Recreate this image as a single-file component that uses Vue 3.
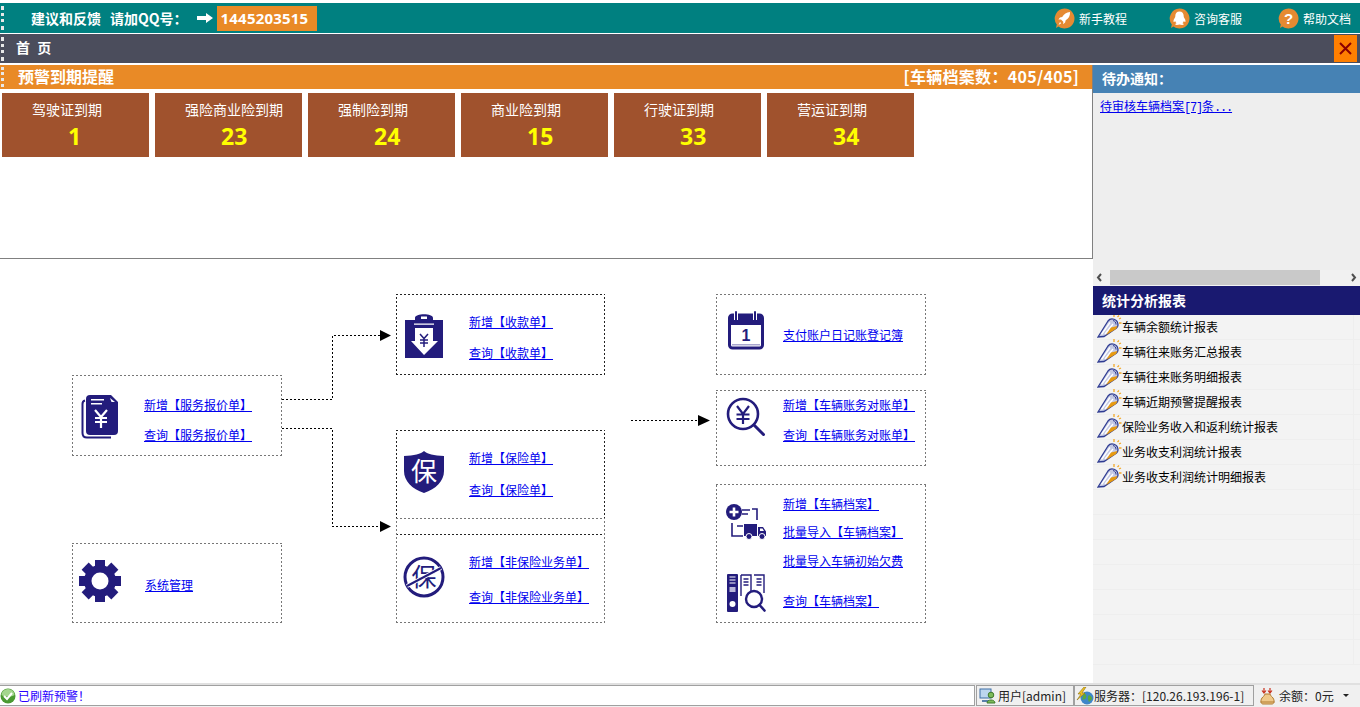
<template>
  <div class="page">
    <div class="top-bar">
      <i class="grip"></i>
      <span class="advice">建议和反馈</span>
      <span class="advice qq">请加QQ号：</span>
      <svg class="arrow-white" width="17" height="10" viewBox="0 0 17 10"><path d="M0 3h9V0l7 5-7 5V7H0z" fill="#fff" /></svg>
      <span class="qq-num">1445203515</span>
      <div class="top-links">
        <a class="top-link t1">
          <svg width="21" height="21" viewBox="0 0 21 21">
            <path d="M10.500 .5a10 10 0 1 1-6 18l-2.500 1.500.8-3.500A10 10 0 0 1 10.500 .5z" fill="#e58a32" />
            <path d="M16 4c-3.500.3-6 2-7.800 5l-2.200.6-1.600 2 2.600-.2 2.300 2.300-.1 2.500 1.900-1.600.6-2.300c3-1.800 4.500-4.300 4.300-8.300z" fill="#fff" />
            <path d="M6 14l1.200 1.200L4.500 17z" fill="#fff" />
          </svg>
          新手教程
        </a>
        <a class="top-link t2">
          <svg width="21" height="21" viewBox="0 0 21 21">
            <path d="M10.500 .5a10 10 0 1 1-6 18l-2.500 1.500.8-3.500A10 10 0 0 1 10.500 .5z" fill="#e58a32" />
            <path d="M10.500 3.500c-2.700 0-4.200 2-4.200 4.400 0 1-.2 1.500-.9 2.600-.9 1.400-1.200 3-.6 3.400.4.200.9-.3 1.300-1 .3 1 .8 1.700 1.500 2.300-1 .4-1.500.8-1.300 1.300.3.600 3 .5 4.200-.1 1.200.6 3.900.7 4.200.1.200-.5-.3-.9-1.300-1.300.7-.6 1.200-1.300 1.500-2.300.4.700.9 1.200 1.300 1 .6-.4.300-2-.6-3.400-.7-1.100-.9-1.600-.9-2.600 0-2.400-1.500-4.400-4.200-4.400z" fill="#fff" />
          </svg>
          咨询客服
        </a>
        <a class="top-link t3">
          <svg width="21" height="21" viewBox="0 0 21 21">
            <path d="M10.500 .5a10 10 0 1 1-6 18l-2.500 1.500.8-3.500A10 10 0 0 1 10.500 .5z" fill="#e58a32" />
            <text x="10.500" y="16" text-anchor="middle" class="q-mark">?</text>
          </svg>
          帮助文档
        </a>
      </div>
    </div>

    <div class="tab-bar">
      <i class="grip"></i>
      <span class="tab-title">首 页</span>
      <button class="close-btn">
        <svg width="13" height="13" viewBox="0 0 13 13"><path d="M1 1l11 11M12 1L1 12" stroke="#8b0000" stroke-width="2" /></svg>
      </button>
    </div>

    <div class="body">
      <div class="left">
        <div class="warn-panel">
          <div class="warn-head">
            <i class="grip"></i>
            <span class="warn-title">预警到期提醒</span>
            <span class="warn-count">[车辆档案数：405/405]</span>
          </div>
          <div class="cards">
            <div v-for="c in cards" :key="c.name" class="card">
              <div class="card-name">{{ c.name }}</div>
              <div class="card-num">{{ c.num }}</div>
            </div>
          </div>
        </div>

        <div class="canvas">
          <div
            v-for="n in nodes"
            :key="n.id"
            class="node"
            :class="n.tone"
            :style="{ left: n.x + 'px', top: n.y + 'px', width: n.w + 'px', height: n.h + 'px' }"
          >
            <div class="links" :style="{ paddingLeft: n.lx + 'px' }">
              <a v-for="(l, i) in n.links" :key="l[0]" class="link" :style="{ marginTop: linkGap(n, i) + 'px' }">{{ l[0] }}</a>
            </div>
          </div>

          <svg class="wires" width="1092" height="424" viewBox="0 0 1092 424">
            <path class="wire" d="M282 140.500H332.500V76.500H380" />
            <path class="wire" d="M282 169.500H332.500V267.500H380" />
            <path class="wire" d="M631 161.500H698" />
            <path d="M380 71l11 5.500-11 5.500zM380 262l11 5.500-11 5.500zM698 156l12 5.500-12 5.500z" fill="#000" />

            <!-- 服务报价单 -->
            <g transform="translate(81 136)" fill="#231c7c">
              <path d="M4 5.500C2 6 1.500 7 1.500 9v29c0 3 1.500 4.500 4.500 4.500h24" fill="none" stroke="#231c7c" stroke-width="2" />
              <path d="M9 0h21l7 7v29a4 4 0 0 1-4 4H9a4 4 0 0 1-4-4V4a4 4 0 0 1 4-4z" />
              <path d="M10 4h13v1.500H10zM10 8h11v1.500H10zM29 3l5 4h-3.500z" fill="#fff" />
              <path d="M14 15l6 7 6-7M20 22v11M14 23h12M14 27h12" fill="none" stroke="#fff" stroke-width="2.200" />
            </g>

            <!-- 系统管理 -->
            <g transform="translate(100 322)" fill="#231c7c">
              <rect v-for="a in [0, 45, 90, 135]" :key="a" x="-5" y="-21" width="10" height="42" :transform="`rotate(${a})`" />
              <circle r="16" />
              <circle r="8.500" fill="#fff" />
            </g>

            <!-- 收款单 -->
            <g transform="translate(405 55)">
              <path fill="#231c7c" d="M0 6h10V4c0-5 18-5 18 0v2h10v38H0z" />
              <path fill="#fff" d="M16 2.500h6v2.500h-6zM9 9.500h20v1.200H9z" />
              <path fill="#fff" d="M10 14h18v13h5L19 41 6 27h4z" />
              <path d="M15 20l4 4.500 4-4.500M19 24.500V33M15 26h8M15 29h8" fill="none" stroke="#231c7c" stroke-width="1.500" />
            </g>

            <!-- 保险单 -->
            <g transform="translate(404 192)">
              <path fill="#231c7c" d="M20 0c3 3 10 4.500 20 5v15c0 10-8 18-20 22C8 38 0 30 0 20V5c10-.5 17-2 20-5z" />
              <text x="20" y="30" text-anchor="middle" class="ico-cn shield">保</text>
            </g>

            <!-- 非保险业务单 -->
            <g transform="translate(403 297)">
              <circle cx="21" cy="21" r="19" fill="#fff" stroke="#231c7c" stroke-width="3" />
              <text x="21" y="30" text-anchor="middle" class="ico-cn noins">保</text>
              <path d="M4 30L38 12" stroke="#fff" stroke-width="4" />
              <path d="M4 30L38 12" stroke="#231c7c" stroke-width="2" />
            </g>

            <!-- 日记账 -->
            <g transform="translate(728 52)">
              <rect x="1.500" y="4" width="33" height="33" rx="3" fill="#fff" stroke="#231c7c" stroke-width="3" />
              <path fill="#231c7c" d="M1 4h34v10H1z" />
              <path d="M8 1v8M27 1v8" stroke="#fff" stroke-width="4" />
              <path d="M8 1v8M27 1v8" stroke="#231c7c" stroke-width="2" stroke-linecap="round" />
              <path d="M4 33h28v1.500H4z" fill="#a9a6cf" />
              <text x="18" y="30" text-anchor="middle" class="ico-one">1</text>
            </g>

            <!-- 车辆账务对账单 -->
            <g transform="translate(727 139)">
              <circle cx="16" cy="16" r="15" fill="#fff" stroke="#231c7c" stroke-width="2.600" />
              <path d="M27 27l9.500 9.500" stroke="#231c7c" stroke-width="3" stroke-linecap="round" />
              <path d="M10 8l6 8 6-8M16 16v10M9.500 16.500h13M9.500 21h13" fill="none" stroke="#231c7c" stroke-width="2.200" />
            </g>

            <!-- 车辆档案 -->
            <g transform="translate(725 245)">
              <circle cx="9" cy="8" r="8" fill="#231c7c" />
              <path d="M4.500 8h9M9 3.500v9" stroke="#fff" stroke-width="2.600" />
              <path d="M17 6h8M17 10h6M27 5h5v11M7 19v13h11M12 22h6" fill="none" stroke="#231c7c" stroke-width="1.600" />
              <path fill="#231c7c" d="M19 20h13v12H19zM33 23h5l3 4.500V32h-8z" />
              <circle cx="24" cy="32.500" r="3" fill="#231c7c" stroke="#fff" />
              <circle cx="37" cy="32.500" r="3" fill="#231c7c" stroke="#fff" />
              <path d="M35 24.500h2.500l1.500 2.500h-4z" fill="#fff" />
            </g>
            <g transform="translate(727 315)">
              <rect x="0" y="0" width="11" height="38" rx="1" fill="#231c7c" />
              <path d="M2.500 3h6M2.500 6h6M2.500 9h6" stroke="#fff" stroke-width="1.200" />
              <rect x="2.500" y="13" width="6" height="5" fill="#b9b7da" />
              <circle cx="5.500" cy="30" r="3" fill="#fff" />
              <path d="M14 1h10v18M27 1h10v18M14 1v21M16.500 5h5M16.500 8h5M16.500 11h5M29.500 5h5M29.500 8h5M29.500 11h5" fill="none" stroke="#231c7c" stroke-width="1.400" />
              <circle cx="27" cy="25" r="8" fill="#fff" stroke="#231c7c" stroke-width="2.400" />
              <path d="M32.500 31l5 5.500" stroke="#231c7c" stroke-width="2.600" stroke-linecap="round" />
            </g>
          </svg>
        </div>
      </div>

      <aside class="right">
        <div class="todo-head">待办通知：</div>
        <div class="todo-body">
          <a class="todo-link">待审核车辆档案<span class="half">[7]</span>条<span class="half">...</span></a>
        </div>
        <div class="scrollbar">
          <svg width="17" height="15" viewBox="0 0 17 15"><path d="M8 4L5 7.500 8 11" fill="none" stroke="#505050" stroke-width="2" /></svg>
          <div class="track"><div class="thumb"></div></div>
          <svg width="17" height="15" viewBox="0 0 17 15"><path d="M9 4l3 3.500L9 11" fill="none" stroke="#505050" stroke-width="2" /></svg>
        </div>
        <div class="report-head">统计分析报表</div>
        <div class="reports">
          <div v-for="r in reports" :key="r" class="report">
            <svg width="25" height="24" viewBox="0 0 25 24">
              <path d="M1 23L11 7c3-4 10-2 10 4 0 1-.5 2-1.500 3L7 22.500z" fill="#c4c9e4" stroke="#2f3c92" stroke-width="1.300" />
              <path d="M4.500 20.500L13 8.500M8 20l8-10" stroke="#fff" stroke-width="1.300" fill="none" />
              <path d="M9 21l5-7.500 6.500-1.500-1.500 3z" fill="#e79a10" />
              <path d="M19 10.500c0-2-1-3.500-3-4" stroke="#2f3c92" fill="none" />
              <path d="M17 0v3M22 5l2-1M22 9h2.500M20.500 3l1.500-1.500" stroke="#f3a928" stroke-width="1.300" />
            </svg>
            <span>{{ r }}</span>
          </div>
          <div v-for="i in 7" :key="i" class="report blank"></div>
        </div>
      </aside>
    </div>

    <div class="status-bar">
      <div class="status-msg">
        <svg width="16" height="16" viewBox="0 0 16 16">
          <circle cx="8" cy="8" r="7.500" fill="#4b9a32" />
          <path d="M1.500 7a6.500 6 0 0 1 13 0c-3 2-10 2-13 0z" fill="#a4d68e" />
          <path d="M4 8l3 3 5-6" fill="none" stroke="#fff" stroke-width="2" />
        </svg>
        <span>已刷新预警！</span>
      </div>
      <div class="status-cell user">
        <svg width="17" height="17" viewBox="0 0 17 17">
          <rect x="1" y="2" width="11" height="9" fill="#bcd6ee" stroke="#3f6fa5" />
          <path d="M3 13h7v2H3z" fill="#5a80aa" />
          <circle cx="12" cy="8" r="2.800" fill="#7dbb5a" stroke="#3f7a2b" />
          <path d="M8 16c0-4 8-4 8 0z" fill="#7dbb5a" stroke="#3f7a2b" />
        </svg>
        用户[admin]
      </div>
      <div class="status-cell server">
        <svg width="18" height="18" viewBox="0 0 18 18">
          <circle cx="11" cy="11" r="6.500" fill="#3f86c9" />
          <path d="M8 6c2 1 3 3 2 5s-3 1-4 2M13 8c2 1 3 2 3 4l-3 3c-1-2-2-5 0-7z" fill="#5aa83c" />
          <path d="M8 0L2 7h3L1 13l8-7H6l4-6z" fill="#f0c020" stroke="#8a7010" stroke-width=".6" />
        </svg>
        服务器：[120.26.193.196-1]
      </div>
      <div class="status-cell money">
        <svg width="17" height="18" viewBox="0 0 17 18">
          <path d="M5 1v5M3 3.500L5 6l2-2.500M11 1v5M9 3.500L11 6l2-2.500" fill="none" stroke="#c8321e" stroke-width="1.200" />
          <path d="M6 7h5c.5 2 2 2.500 3 4 2 3 1 6-1 6H4c-2 0-3-3-1-6 1-1.500 2.500-2 3-4z" fill="#efc98a" stroke="#b07a30" />
          <path d="M1.500 15h14" stroke="#b07a30" />
        </svg>
        余额：0元
        <i class="caret"></i>
      </div>
    </div>
  </div>
</template>

<script setup>
const cards = [
  { name: '驾驶证到期', num: 1 },
  { name: '强险商业险到期', num: 23 },
  { name: '强制险到期', num: 24 },
  { name: '商业险到期', num: 15 },
  { name: '行驶证到期', num: 33 },
  { name: '营运证到期', num: 34 },
]

const reports = [
  '车辆余额统计报表',
  '车辆往来账务汇总报表',
  '车辆往来账务明细报表',
  '车辆近期预警提醒报表',
  '保险业务收入和返利统计报表',
  '业务收支利润统计报表',
  '业务收支利润统计明细报表',
]

// y 都是相对 .canvas 的坐标，links 第二项是文字中线距节点顶部的距离
const nodes = [
  { id: 'a', x: 72, y: 116, w: 210, h: 81, lx: 72, tone: 'gray', links: [['新增【服务报价单】', 30], ['查询【服务报价单】', 60]] },
  { id: 'gear', x: 72, y: 284, w: 210, h: 80, lx: 73, tone: 'gray', links: [['系统管理', 42]] },
  { id: 'b', x: 396, y: 35, w: 209, h: 81, lx: 73, tone: 'dark', links: [['新增【收款单】', 28], ['查询【收款单】', 59]] },
  { id: 'c', x: 396, y: 171, w: 209, h: 105, lx: 73, tone: 'dark', links: [['新增【保险单】', 28], ['查询【保险单】', 60]] },
  { id: 'd', x: 396, y: 259, w: 209, h: 105, lx: 73, tone: 'gray', links: [['新增【非保险业务单】', 44], ['查询【非保险业务单】', 79]] },
  { id: 'e', x: 716, y: 35, w: 210, h: 81, lx: 67, tone: 'gray', links: [['支付账户日记账登记簿', 41]] },
  { id: 'f', x: 716, y: 131, w: 210, h: 76, lx: 67, tone: 'gray', links: [['新增【车辆账务对账单】', 15], ['查询【车辆账务对账单】', 45]] },
  { id: 'g', x: 716, y: 225, w: 210, h: 139, lx: 67, tone: 'gray', links: [['新增【车辆档案】', 20], ['批量导入【车辆档案】', 48], ['批量导入车辆初始欠费', 77], ['查询【车辆档案】', 117]] },
]

function linkGap(n, i) {
  const prev = i === 0 ? 1 : n.links[i - 1][1] + 8
  return n.links[i][1] - 8 - prev
}
</script>

<style>
html,
body {
  margin: 0;
  background: #fff;
}
</style>

<style scoped>
.page {
  width: 1360px;
  height: 707px;
  display: flex;
  flex-direction: column;
  overflow: hidden;
  font-family: "Noto Sans CJK SC", "Noto Sans", sans-serif;
  font-size: 12px;
  color: #000;
}

.grip {
  display: block;
  width: 0;
  height: 24px;
  border-left: 3px dotted #e8e8e8;
  margin-left: 1px;
  flex: none;
}

.top-bar {
  height: 30px;
  margin-top: 3px;
  background: #008080;
  display: flex;
  align-items: center;
  color: #fff;
  flex: none;
}

.advice {
  font-size: 14px;
  font-weight: 700;
  margin-left: 27px;
  white-space: nowrap;
}

.advice.qq {
  margin-left: 9px;
}

.arrow-white {
  margin-left: 9px;
}

.qq-num {
  width: 100px;
  height: 25px;
  line-height: 25px;
  margin-left: 3px;
  box-sizing: border-box;
  padding-left: 4px;
  background: #e98a26;
  font-family: "Open Sans", sans-serif;
  font-weight: 700;
  font-size: 15px;
  letter-spacing: 0.2px;
}

.top-links {
  margin-left: auto;
  display: flex;
  align-items: center;
}

.top-link {
  display: flex;
  align-items: center;
  gap: 4px;
  color: #fff;
  font-size: 12px;
  white-space: nowrap;
}

.top-link.t1 {
  margin-right: 42px;
}

.top-link.t2 {
  margin-right: 36px;
}

.top-link.t3 {
  margin-right: 9px;
}

.q-mark {
  font: 700 15px "Liberation Sans", sans-serif;
  fill: #fff;
}

.tab-bar {
  height: 29px;
  margin-top: 1px;
  background: #4b4d5c;
  display: flex;
  align-items: center;
  color: #fff;
  flex: none;
}

.tab-title {
  margin: 0 0 3px 12px;
  font-size: 14px;
  font-weight: 700;
  letter-spacing: 2px;
}

.close-btn {
  margin-left: auto;
  margin-right: 3px;
  width: 23px;
  height: 27px;
  padding: 0;
  border: none;
  background: #ff7f00;
  display: flex;
  align-items: center;
  justify-content: center;
}

.body {
  flex: 1;
  min-height: 0;
  margin-top: 2px;
  display: flex;
}

.left {
  width: 1093px;
  flex: none;
  display: flex;
  flex-direction: column;
}

.warn-panel {
  height: 194px;
  box-sizing: border-box;
  border-right: 1px solid #808080;
  border-bottom: 1px solid #808080;
  flex: none;
}

.warn-head {
  height: 24px;
  background: #e98a26;
  display: flex;
  align-items: center;
  color: #fff;
  font-size: 16px;
  font-weight: 700;
}

.warn-head .grip {
  height: 20px;
}

.warn-title {
  margin: 0 0 2px 14px;
}

.warn-count {
  margin: 0 13px 2px auto;
  letter-spacing: 0.3px;
}

.cards {
  display: flex;
  gap: 6px;
  padding: 4px 0 0 2px;
}

.card {
  width: 147px;
  height: 64px;
  box-sizing: border-box;
  background: #a0522d;
  padding-top: 7px;
}

.card-name {
  padding-left: 30px;
  color: #fff;
  font-size: 14px;
  line-height: 18px;
}

.card-num {
  padding-left: 66px;
  color: #ffff00;
  font-size: 23px;
  font-weight: 700;
  line-height: 30px;
  margin-top: 3px;
  font-family: "Open Sans", sans-serif;
}

.canvas {
  position: relative;
  flex: 1;
  background: #fff;
}

/* 截图里的点线周期约 4px，dotted 画不出来，用渐变铺四条边 */
.node {
  --dot: #777;
  position: absolute;
  box-sizing: border-box;
  background:
    repeating-linear-gradient(90deg, var(--dot) 0 2px, transparent 2px 4px) 0 0 / 100% 1px no-repeat,
    repeating-linear-gradient(90deg, var(--dot) 0 2px, transparent 2px 4px) 0 100% / 100% 1px no-repeat,
    repeating-linear-gradient(0deg, var(--dot) 0 2px, transparent 2px 4px) 0 0 / 1px 100% no-repeat,
    repeating-linear-gradient(0deg, var(--dot) 0 2px, transparent 2px 4px) 100% 0 / 1px 100% no-repeat;
  padding-top: 1px;
}

.node.dark {
  --dot: #222;
}

.links {
  display: flex;
  flex-direction: column;
  align-items: flex-start;
}

.link {
  color: #0000ee;
  font-size: 12px;
  line-height: 16px;
  text-decoration: underline;
  white-space: nowrap;
}

.wires {
  position: absolute;
  left: 0;
  top: 0;
  pointer-events: none;
}

.wire {
  fill: none;
  stroke: #000;
  stroke-width: 1;
  stroke-dasharray: 2 2;
  shape-rendering: crispEdges;
}

.ico-cn {
  font-family: "Noto Sans CJK SC", sans-serif;
}

.ico-cn.shield {
  font-size: 26px;
  fill: #fff;
}

.ico-cn.noins {
  font-size: 25px;
  fill: #231c7c;
}

.ico-one {
  font: 700 16px "Liberation Sans", sans-serif;
  fill: #231c7c;
}

.right {
  flex: 1;
  min-width: 0;
  display: flex;
  flex-direction: column;
  background: #f3f3f3;
}

.todo-head {
  height: 28px;
  line-height: 27px;
  padding-left: 9px;
  background: #4682b4;
  color: #fff;
  font-size: 14px;
  font-weight: 700;
  flex: none;
}

.todo-body {
  height: 177px;
  box-sizing: border-box;
  padding: 4px 0 0 7px;
  background: #eeeeee;
  flex: none;
}

.todo-link {
  color: #0000ee;
  font-size: 12px;
  line-height: 18px;
  text-decoration: underline;
}

/* 半角字符按 6px 一格 */
.half {
  font-family: "Liberation Mono", monospace;
  letter-spacing: -1.2px;
}

.scrollbar {
  height: 15px;
  display: flex;
  background: #f1f1f1;
  flex: none;
}

.track {
  flex: 1;
}

.thumb {
  width: 210px;
  height: 15px;
  background: #c9c9c9;
}

.report-head {
  height: 29px;
  line-height: 28px;
  margin-top: 1px;
  padding-left: 9px;
  background: #191970;
  color: #fff;
  font-size: 14px;
  font-weight: 700;
  flex: none;
}

.reports {
  flex: 1;
  overflow: hidden;
}

.report {
  height: 25px;
  box-sizing: border-box;
  border-bottom: 1px solid #eeeeee;
  background: linear-gradient(#eeeeee, #eeeeee) 260px 0 / 1px 100% no-repeat;
  display: flex;
  align-items: center;
  padding: 0 0 2px 4px;
  white-space: nowrap;
}

.status-bar {
  height: 24px;
  box-sizing: border-box;
  border-top: 2px solid #e0e0e0;
  background: #f0f0f0;
  display: flex;
  align-items: stretch;
  padding-bottom: 1px;
  flex: none;
  color: #222;
}

.status-msg {
  width: 975px;
  box-sizing: border-box;
  border: 1px solid #a0a0a0;
  border-left: none;
  background: #fff;
  display: flex;
  align-items: center;
  gap: 2px;
  color: #2a00ff;
}

.status-cell {
  display: flex;
  align-items: center;
  gap: 3px;
  box-sizing: border-box;
  white-space: nowrap;
}

.status-cell.user {
  width: 98px;
  margin-left: 1px;
  padding-left: 2px;
  gap: 2px;
  border: 1px solid #a0a0a0;
}

.status-cell.server {
  width: 180px;
  padding-left: 1px;
  gap: 0;
  border: 1px solid #a0a0a0;
}

.status-cell.money {
  padding-left: 5px;
}

.caret {
  width: 0;
  height: 0;
  margin-left: 6px;
  border-left: 3px solid transparent;
  border-right: 3px solid transparent;
  border-top: 3px solid #222;
}
</style>
